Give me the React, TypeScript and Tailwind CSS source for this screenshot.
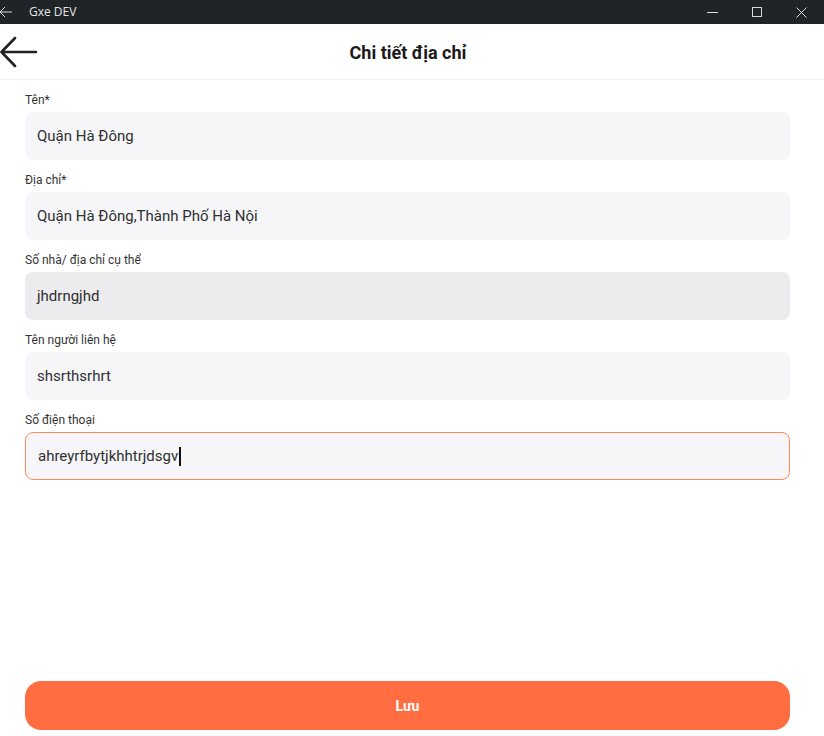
import React from 'react';

type Field = { label: string; value: string; tone?: 'muted' | 'focus' };

const fields: Field[] = [
    { label: 'Tên*', value: 'Quận Hà Đông' },
    { label: 'Địa chỉ*', value: 'Quận Hà Đông,Thành Phố Hà Nội' },
    { label: 'Số nhà/ địa chỉ cụ thể', value: 'jhdrngjhd', tone: 'muted' },
    { label: 'Tên người liên hệ', value: 'shsrthsrhrt' },
    { label: 'Số điện thoại', value: 'ahreyrfbytjkhhtrjdsgv', tone: 'focus' },
];

const TitleBar: React.FC = () => (
    <div className="h-6 bg-[#1f2427] flex items-center text-[#e6e6e6]" style={{ fontFamily: '"Open Sans", "Noto Sans", sans-serif' }}>
        <svg width="14" height="12" viewBox="0 0 14 12" className="ml-[-1px]" fill="none" stroke="#d8d8d8" strokeWidth="1">
            <path d="M13 6H1M6 1 1 6l5 5" />
        </svg>
        <span className="ml-4 text-xs">Gxe DEV</span>
        <div className="ml-auto flex items-center h-full">
            <div className="w-[46px] h-full flex items-center justify-center">
                <div className="w-[11px] h-px bg-[#d8d8d8]" />
            </div>
            <div className="w-[44px] h-full flex items-center justify-center">
                <div className="w-[10px] h-[10px] border border-[#d8d8d8]" />
            </div>
            <div className="w-[45px] h-full flex items-center justify-center">
                <svg width="11" height="11" viewBox="0 0 11 11" stroke="#d8d8d8" strokeWidth="1">
                    <path d="M0.5 0.5l10 10M10.5 0.5l-10 10" />
                </svg>
            </div>
        </div>
    </div>
);

const App: React.FC = () => {
    return (
        <div className="h-[736px] w-[824px] bg-white flex flex-col overflow-hidden" style={{ fontFamily: 'Roboto, "Liberation Sans", sans-serif' }}>
            <TitleBar />
            <div className="h-[56px] relative flex items-center justify-center pr-2 border-b border-[#f2f2f2]">
                <button className="absolute left-0 top-[12px]">
                    <svg width="38" height="32" viewBox="0 0 38 32" fill="none" stroke="#1f2124" strokeWidth="2.6" strokeLinecap="round" strokeLinejoin="round">
                        <path d="M36 16H2M15 2 1.5 16 15 30" />
                    </svg>
                </button>
                <h1 className="text-[18px] font-bold text-[#1a1a1a] pt-[2px]">Chi tiết địa chỉ</h1>
            </div>

            <div className="flex-1 pt-[12px] pl-[25px] pr-[34px] flex flex-col">
                {fields.map((f, i) => (
                    <div key={i} className="mb-[12px]">
                        <div className="h-4 text-xs leading-4 text-[#333]">{f.label}</div>
                        <div
                            className={`mt-[4px] h-12 rounded-lg flex items-center pl-3 text-[15px] text-[#303030] ${
                                f.tone === 'muted'
                                    ? 'bg-[#ececee]'
                                    : f.tone === 'focus'
                                    ? 'bg-[#f6f6f8] border border-[#ff8a63]'
                                    : 'bg-[#f6f6f8]'
                            }`}
                        >
                            <span>{f.value}</span>
                            {f.tone === 'focus' && <span className="w-[2px] h-[19px] bg-[#111] ml-[1px]" />}
                        </div>
                    </div>
                ))}
            </div>

            <div className="pl-[25px] pr-[34px] pb-[6px]">
                <button className="w-full h-[49px] rounded-2xl bg-[#ff6d41] text-white text-sm font-bold">Lưu</button>
            </div>
        </div>
    );
};

export default App;
